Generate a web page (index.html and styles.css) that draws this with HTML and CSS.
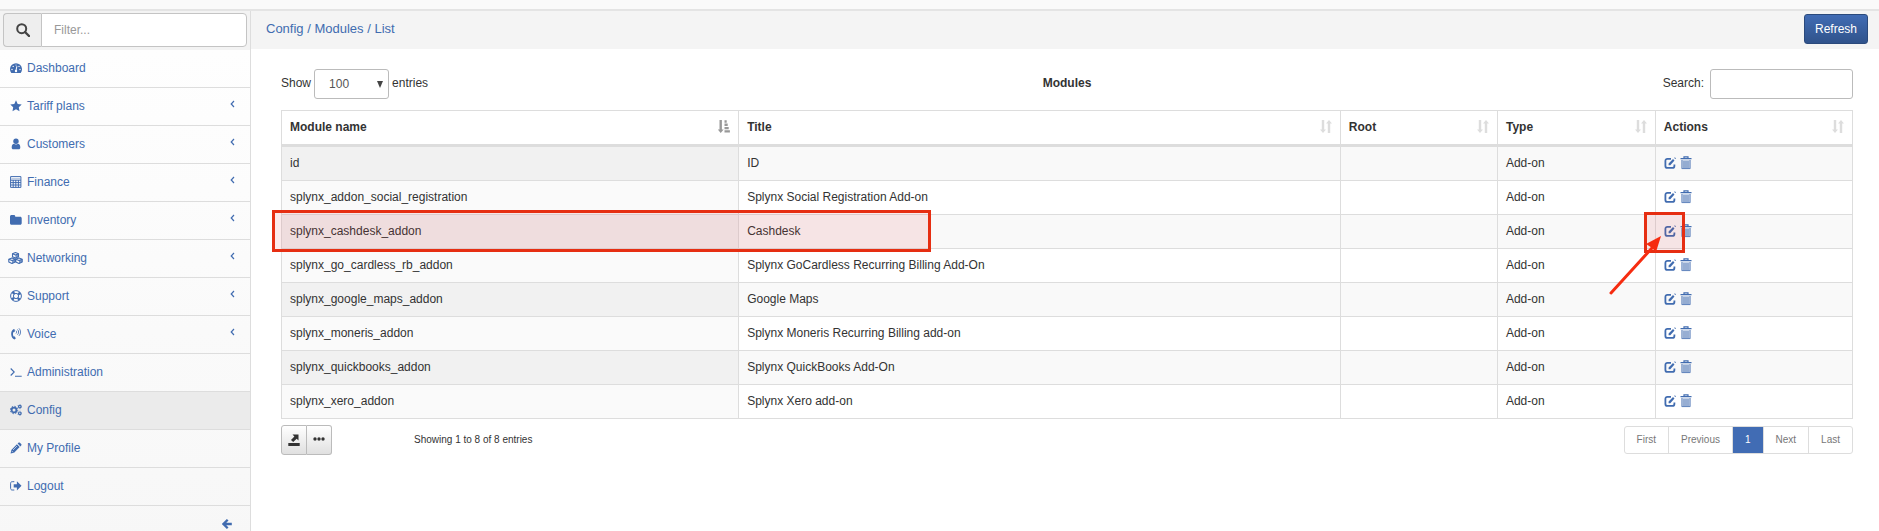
FILE: index.html
```
<!DOCTYPE html>
<html lang="en">
<head>
<meta charset="utf-8">
<title>Config / Modules / List</title>
<link rel="stylesheet" href="styles.css">
</head>
<body>
<svg class="sprite" aria-hidden="true">
  <defs>
    <symbol id="edit" viewBox="0 0 12 12"><path d="M7 1.900H3.400a2 2 0 0 0-2 2v5a2 2 0 0 0 2 2h5a2 2 0 0 0 2-2V7.400" fill="none" stroke="currentColor" stroke-width="1.800"/><path d="M4.600 8.200V6.400L9 2l1.500 1.500-4.200 4.700zM10.200 1l.7-.7L12 1.400l-.7.7z" fill="currentColor"/></symbol>
    <symbol id="trash" viewBox="0 0 12 14"><path d="M4 2V.8h4V2M.5 2.700h11" fill="none" stroke="currentColor" stroke-width="1.200"/><path d="M1.500 4h9v9h-9z" fill="currentColor" fill-opacity=".3"/><path d="M1.900 4v8.600h8.200V4M4 5v7.500M6 5v7.500M8 5v7.500" fill="none" stroke="currentColor" stroke-width=".7"/></symbol>
    <symbol id="sort" viewBox="0 0 12 14"><path d="M1.800 0h2.400v9.500H6L3 13 0 9.500h1.800zM7.800 13h2.400V3.500H12L9 0 6 3.500h1.800z" fill="currentColor"/></symbol>
    <symbol id="chevron" viewBox="0 0 5 8"><path d="M4 1 1.200 4 4 7" fill="none" stroke="currentColor" stroke-width="1.200"/></symbol>
  </defs>
</svg>
<div class="topbar"></div>
<div class="layout">
  <aside class="sidebar">
    <div class="filter">
      <label class="filter-icon" for="filter" aria-label="Filter"><svg width="14" height="14" viewBox="0 0 14 14"><circle cx="5.700" cy="5.700" r="4.500" fill="none" stroke="currentColor" stroke-width="2"/><path d="m9 9 4 4" stroke="currentColor" stroke-width="2.400" stroke-linecap="round"/></svg></label>
      <input class="filter-input" id="filter" type="text" placeholder="Filter...">
    </div>
    <nav class="menu">
      <a class="item" href="#"><svg class="icon" viewBox="0 0 12 12"><path d="M1.300 11a6 6 0 1 1 9.400 0z" fill="currentColor"/><path d="m6 8.500.9-4.300" stroke="#fff" stroke-width="1"/><g fill="#fff"><circle cx="6" cy="9" r="1.200"/><circle cx="2" cy="7.500" r=".7"/><circle cx="3.200" cy="4.400" r=".7"/><circle cx="6" cy="3" r=".6"/><circle cx="9" cy="4.400" r=".7"/><circle cx="10" cy="7.500" r=".7"/></g></svg><span>Dashboard</span></a>
      <a class="item" href="#"><svg class="icon" viewBox="0 0 12 12"><path d="m6 .3 1.700 3.600 4 .5-2.900 2.800.7 4L6 9.300l-3.500 1.900.7-4L.3 4.400l4-.5z" fill="currentColor"/></svg><span>Tariff plans</span><svg class="chevron"><use href="#chevron"/></svg></a>
      <a class="item" href="#"><svg class="icon" viewBox="0 0 12 12"><circle cx="6" cy="3.200" r="2.700" fill="currentColor"/><path d="M1.700 9.500c0-2.500 1-3.700 2.300-3.700 1.200.9 2.800.9 4 0 1.300 0 2.300 1.200 2.300 3.700 0 1-.6 1.800-1.600 1.800H3.300c-1 0-1.600-.8-1.600-1.800z" fill="currentColor"/></svg><span>Customers</span><svg class="chevron"><use href="#chevron"/></svg></a>
      <a class="item" href="#"><svg class="icon" viewBox="0 0 12 12"><path d="M.6.6h10.300v10.800H.6zM.6 4.200h10.300M.6 6.600h10.300M.6 9h10.300M3.200 4v7.500M5.800 4v7.500M8.400 4v7.500" fill="none" stroke="currentColor"/><path d="M1.500 2h8.500v1.200H1.500z" fill="currentColor" fill-opacity=".35"/></svg><span>Finance</span><svg class="chevron"><use href="#chevron"/></svg></a>
      <a class="item" href="#"><svg class="icon" viewBox="0 0 12 12"><path d="M0 2.500C0 1.600.7 1 1.500 1h2.400c.8 0 1.400.7 1.400 1.700h4.900c.9 0 1.500.6 1.500 1.500v5c0 .9-.6 1.500-1.500 1.500H1.500C.7 10.700 0 10.100 0 9.200z" fill="currentColor"/></svg><span>Inventory</span><svg class="chevron"><use href="#chevron"/></svg></a>
      <a class="item" href="#"><svg class="icon icon-wide" viewBox="0 0 15 12"><g fill="none" stroke="currentColor" stroke-width="1.100" stroke-linejoin="round"><path d="m7.500.6 3 1.200v3l-3 1.300-3-1.300v-3zM4 5.900l3.200 1.300v2.900L4 11.400.8 10.100V7.200zM11 5.900l3.200 1.300v2.900L11 11.400l-3.200-1.300V7.200z"/><path d="m4.500 1.800 3 1.300 3-1.300M.8 7.200 4 8.500l3.200-1.300M7.800 7.200 11 8.500l3.200-1.300"/></g><path d="m7.500 3.100 3-1.300v3l-3 1.300zM4 8.500l3.200-1.300v2.900L4 11.400zM11 8.500l3.200-1.300v2.900L11 11.400z" fill="currentColor" fill-opacity=".7"/></svg><span>Networking</span><svg class="chevron"><use href="#chevron"/></svg></a>
      <a class="item" href="#"><svg class="icon" viewBox="0 0 12 12"><g fill="none" stroke="currentColor"><circle cx="6" cy="6" r="5.400"/><circle cx="6" cy="6" r="2.600"/><circle cx="6" cy="6" r="4" stroke-width="3" stroke-dasharray="2.300 3.983" stroke-dashoffset="-2"/></g></svg><span>Support</span><svg class="chevron"><use href="#chevron"/></svg></a>
      <a class="item" href="#"><svg class="icon" viewBox="0 0 12 12"><path d="M4.900 1.800 3.800 1C1.800 2 1 4 1.200 6.500c.2 2.600 1.400 4.400 3.300 5l1.300-.9-.9-2.200-1.300.2c-.7-1.500-.8-3-.3-4.400l1.300-.1z" fill="currentColor"/><g fill="none" stroke="currentColor" stroke-width=".9"><path d="M6 2.700c.8.8.8 2 0 2.800M7.500 1.500c1.500 1.500 1.500 3.700 0 5.200M9 .4c2 2 2 5.400 0 7.400"/></g></svg><span>Voice</span><svg class="chevron"><use href="#chevron"/></svg></a>
      <a class="item" href="#"><svg class="icon" viewBox="0 0 12 12"><path d="M.7 2.500 4.200 6 .7 9.500M5 10.300h6.700" fill="none" stroke="currentColor" stroke-width="1.100"/></svg><span>Administration</span></a>
      <a class="item active" href="#"><svg class="icon" viewBox="0 0 12 12"><g fill="none" stroke="currentColor"><circle cx="4" cy="6" r="2.400" stroke-width="1.800"/><circle cx="4" cy="6" r="3.700" stroke-width="1" stroke-dasharray="1.450 1.456"/><circle cx="9.800" cy="2.600" r="1.300" stroke-width="1.200"/><circle cx="9.800" cy="9.300" r="1.300" stroke-width="1.200"/><circle cx="9.800" cy="2.600" r="2.200" stroke-width=".5" stroke-dasharray="1 1.300"/><circle cx="9.800" cy="9.300" r="2.200" stroke-width=".5" stroke-dasharray="1 1.300"/></g></svg><span>Config</span></a>
      <a class="item" href="#"><svg class="icon" viewBox="0 0 12 12"><path d="m.6 11.400.7-3.500 5.600-5.600 2.800 2.800-5.600 5.600zM7.600 1.600l.8-.8c.5-.5 1-.5 1.500 0l1.300 1.300c.5.5.5 1 0 1.500l-.8.8z" fill="currentColor"/><path d="m1.600 8.800 1.500 1.500M3 8l4-4" stroke="#fff" stroke-width=".6"/></svg><span>My Profile</span></a>
      <a class="item" href="#"><svg class="icon" viewBox="0 0 12 12"><path d="M4.300 1.700H2.200C1.200 1.700.6 2.300.6 3.200v5.200c0 1 .6 1.600 1.600 1.600h2.100" fill="none" stroke="currentColor"/><path d="M3.700 4.200h3.200v-3l4.600 4.600-4.600 4.700v-3H3.700z" fill="currentColor"/></svg><span>Logout</span></a>
      <button class="collapse" type="button" aria-label="Collapse menu"><svg width="10" height="10" viewBox="0 0 10 10"><path d="M5.700.8 1.500 5l4.200 4.200M1.800 5h8" fill="none" stroke="currentColor" stroke-width="2.300"/></svg></button>
    </nav>
  </aside>
  <main class="main">
    <header class="page-head">
      <div class="crumbs"><a href="#">Config</a> / <a href="#">Modules</a> / <a href="#">List</a></div>
      <button class="refresh" type="button">Refresh</button>
    </header>
    <section class="content">
      <div class="tools">
        <div class="length"><label for="length">Show</label>
          <span class="select-wrap"><select id="length"><option>100</option></select></span>
          <span>entries</span></div>
        <strong>Modules</strong>
        <div class="search"><label for="search">Search:</label><input id="search" type="text"></div>
      </div>
      <div class="table-wrap">
        <table class="grid">
          <colgroup><col class="c-name"><col class="c-title"><col class="c-root"><col class="c-type"><col class="c-actions"></colgroup>
          <thead><tr>
            <th><div class="th">Module name<svg class="sorted" viewBox="0 0 12 14"><path d="M1.500 0h2.400v9.500h1.800L2.700 13-.2 9.500h1.700zM6.500.3h2.200v2.400H6.500zM6.500 3.600h3.200V6H6.500zM6.500 6.900h4.200v2.400H6.500zM6.500 10.200h5.400v2.400H6.500z" fill="currentColor"/></svg></div></th>
            <th><div class="th">Title<svg><use href="#sort"/></svg></div></th>
            <th><div class="th">Root<svg><use href="#sort"/></svg></div></th>
            <th><div class="th">Type<svg><use href="#sort"/></svg></div></th>
            <th><div class="th">Actions<svg><use href="#sort"/></svg></div></th>
          </tr></thead>
          <tbody>
            <tr><td>id</td><td>ID</td><td></td><td>Add-on</td><td><div class="acts"><a href="#" aria-label="Edit"><svg class="edit"><use href="#edit"/></svg></a><a href="#" aria-label="Delete"><svg class="trash"><use href="#trash"/></svg></a></div></td></tr>
            <tr><td>splynx_addon_social_registration</td><td>Splynx Social Registration Add-on</td><td></td><td>Add-on</td><td><div class="acts"><a href="#" aria-label="Edit"><svg class="edit"><use href="#edit"/></svg></a><a href="#" aria-label="Delete"><svg class="trash"><use href="#trash"/></svg></a></div></td></tr>
            <tr><td>splynx_cashdesk_addon</td><td>Cashdesk</td><td></td><td>Add-on</td><td><div class="acts"><a href="#" aria-label="Edit"><svg class="edit"><use href="#edit"/></svg></a><a href="#" aria-label="Delete"><svg class="trash"><use href="#trash"/></svg></a></div></td></tr>
            <tr><td>splynx_go_cardless_rb_addon</td><td>Splynx GoCardless Recurring Billing Add-On</td><td></td><td>Add-on</td><td><div class="acts"><a href="#" aria-label="Edit"><svg class="edit"><use href="#edit"/></svg></a><a href="#" aria-label="Delete"><svg class="trash"><use href="#trash"/></svg></a></div></td></tr>
            <tr><td>splynx_google_maps_addon</td><td>Google Maps</td><td></td><td>Add-on</td><td><div class="acts"><a href="#" aria-label="Edit"><svg class="edit"><use href="#edit"/></svg></a><a href="#" aria-label="Delete"><svg class="trash"><use href="#trash"/></svg></a></div></td></tr>
            <tr><td>splynx_moneris_addon</td><td>Splynx Moneris Recurring Billing add-on</td><td></td><td>Add-on</td><td><div class="acts"><a href="#" aria-label="Edit"><svg class="edit"><use href="#edit"/></svg></a><a href="#" aria-label="Delete"><svg class="trash"><use href="#trash"/></svg></a></div></td></tr>
            <tr><td>splynx_quickbooks_addon</td><td>Splynx QuickBooks Add-On</td><td></td><td>Add-on</td><td><div class="acts"><a href="#" aria-label="Edit"><svg class="edit"><use href="#edit"/></svg></a><a href="#" aria-label="Delete"><svg class="trash"><use href="#trash"/></svg></a></div></td></tr>
            <tr><td>splynx_xero_addon</td><td>Splynx Xero add-on</td><td></td><td>Add-on</td><td><div class="acts"><a href="#" aria-label="Edit"><svg class="edit"><use href="#edit"/></svg></a><a href="#" aria-label="Delete"><svg class="trash"><use href="#trash"/></svg></a></div></td></tr>
          </tbody>
        </table>
        <div class="mark mark-row"></div>
        <div class="mark mark-edit"></div>
        <svg class="arrow" viewBox="0 0 54 62"><path d="M2 59 43 14" stroke="#f62c10" stroke-width="3" stroke-linecap="round"/><path d="M52 2 47 18l-4.500-4.500L37 10z" fill="#f62c10"/></svg>
      </div>
      <footer class="foot">
        <div class="left">
          <div class="group"><button type="button" aria-label="Export"><svg width="12" height="12" viewBox="0 0 12 12"><path d="M.3 9h11.400v3H.3zM4.500.5h6v6L8.700 4.800 5.200 8 3 5.900l3.400-3.400z" fill="currentColor"/></svg></button><button type="button" aria-label="More"><svg width="12" height="12" viewBox="0 0 12 12"><g fill="currentColor"><circle cx="2" cy="5" r="1.700"/><circle cx="6" cy="5" r="1.700"/><circle cx="10" cy="5" r="1.700"/></g></svg></button></div>
          <span class="info">Showing 1 to 8 of 8 entries</span>
        </div>
        <nav class="pages"><a href="#">First</a><a href="#">Previous</a><a class="current" href="#">1</a><a href="#">Next</a><a href="#">Last</a></nav>
      </footer>
    </section>
  </main>
</div>
</body>
</html>
```
FILE: styles.css
```
* { box-sizing: border-box; }
body { margin: 0; background: #fff; color: #333; font: 12px/18px "Liberation Sans", Arial, sans-serif; }
a { color: #416cb0; text-decoration: none; }
button, input, select { font: inherit; color: inherit; }
.sprite { position: absolute; width: 0; height: 0; }
.topbar { height: 11px; background: #fafafa; border-bottom: 2px solid #e4e4e4; }
.layout { display: grid; grid-template-columns: 251px minmax(0, 1fr); height: calc(100vh - 11px); overflow: hidden; }

.sidebar { display: flex; flex-direction: column; background: #f8f8f8; border-right: 1px solid #ddd; overflow: hidden; }
.filter { display: flex; flex: none; padding: 2px 3px 3px; background: #f3f3f3; }
.filter-icon { display: flex; align-items: center; justify-content: center; width: 38px; border: 1px solid #c4c4c4; border-right: 0; border-radius: 4px 0 0 4px; background: #eee; color: #444; }
.filter-input { flex: 1; min-width: 0; height: 34px; padding: 0 12px; border: 1px solid #c4c4c4; border-radius: 0 4px 4px 0; background: #fff; }
.filter-input::placeholder { color: #999; }
.menu { display: flex; flex-direction: column; background: linear-gradient(#fefefe, #f7f7f7); }
.item { display: flex; align-items: center; gap: 5px; height: 38px; padding: 0 15px 2px 10px; border-bottom: 1px solid #ddd; }
.item.active { background: #ebebeb; }
.item span { flex: 1; }
.icon { width: 12px; height: 12px; }
.icon-wide { width: 15px; margin: 0 -1px 0 -2px; }
.chevron { width: 5px; height: 8px; margin-bottom: 4px; }
.collapse { align-self: flex-end; display: flex; padding: 13px 18px; border: 0; background: none; color: #416cb0; }

.page-head { display: flex; align-items: center; justify-content: space-between; height: 38px; padding: 0 11px 2px 15px; background: #f4f4f4; }
.crumbs { color: #416cb0; font-size: 13px; }
.refresh { height: 30px; padding: 0 10px; border: 1px solid #2b4a7c; border-radius: 3px; background: linear-gradient(#416cb4, #30538b); color: #fff; }
.content { padding: 20px 26px 0 30px; }
.tools { display: grid; grid-template-columns: 1fr auto 1fr; align-items: center; height: 30px; margin-bottom: 11px; }
.tools label, .tools strong, .length > span:last-child { padding-bottom: 2px; }
.length { display: flex; align-items: center; gap: 3px; }
.select-wrap { position: relative; }
.select-wrap::after { content: ""; position: absolute; right: 6px; top: 12px; border: 3px solid transparent; border-top: 7px solid #444; border-bottom: 0; pointer-events: none; }
.tools select { display: block; width: 75px; height: 30px; padding: 0 14px; border: 1px solid #bbb; border-radius: 3px; background: #fff; color: #555; appearance: none; }
.search { display: flex; align-items: center; justify-content: flex-end; gap: 6px; }
.search input { width: 143px; height: 30px; padding: 0 8px; border: 1px solid #bbb; border-radius: 3px; background: #fff; }

.table-wrap { position: relative; }
.grid { width: 100%; table-layout: fixed; border-collapse: separate; border-spacing: 0; border: solid #ddd; border-width: 1px 0 0 1px; }
.c-name { width: 29.1%; }
.c-title { width: 38.3%; }
.c-root { width: 10%; }
.c-type { width: 10.05%; }
.grid th, .grid td { height: 34px; padding: 0 8px 2px; border: solid #ddd; border-width: 0 1px 1px 0; text-align: left; }
.grid th { height: 36px; border-bottom-width: 3px; }
.th { display: flex; align-items: center; justify-content: space-between; }
.th svg { width: 12px; height: 14px; color: #ddd; }
.th .sorted { color: #999; }
tbody tr:nth-child(odd) { background: #f9f9f9; }
tbody td:first-child { background: #fafafa; }
tbody tr:nth-child(odd) td:first-child { background: #f1f1f1; }
.acts { display: flex; align-items: center; gap: 4px; }
.acts a { display: flex; }
.edit { width: 12px; height: 12px; }
.trash { width: 12px; height: 14px; }

.mark { position: absolute; border: 3px solid #e62e12; background: rgba(230, 46, 60, .1); }
.mark-row { left: -9px; top: 100px; width: 659px; height: 42px; }
.mark-edit { right: 168px; top: 102px; width: 41px; height: 41px; }
.arrow { position: absolute; right: 190px; top: 124px; width: 54px; height: 62px; }

.foot { display: flex; align-items: center; justify-content: space-between; padding-top: 6px; }
.left { display: flex; align-items: center; gap: 82px; }
.group { display: flex; }
.group button { display: flex; align-items: center; justify-content: center; width: 26px; height: 30px; padding: 0; border: 1px solid #bbb; background: linear-gradient(#fff, #e0e0e0); }
.group button:first-child { border-radius: 3px 0 0 3px; }
.group button:last-child { border-left: 0; border-radius: 0 3px 3px 0; width: 25px; }
.info { font-size: 10px; }
.pages { display: flex; font-size: 10px; border: 1px solid #ddd; border-radius: 3px; overflow: hidden; }
.pages a { padding: 4px 12px; border-right: 1px solid #ddd; color: #777; }
.pages a:last-child { border-right: 0; }
.pages .current { background: #416cb4; color: #fff; }
```
